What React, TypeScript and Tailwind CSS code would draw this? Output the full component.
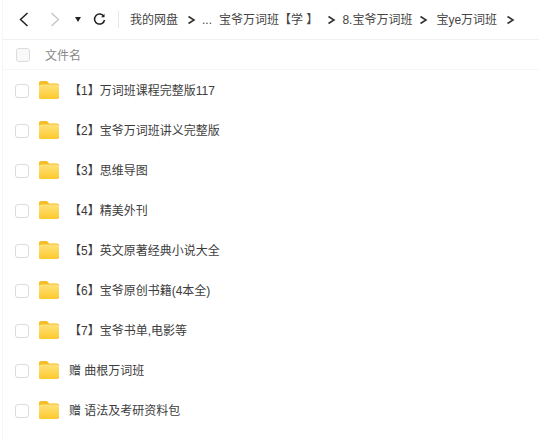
const files = [
  '【1】万词班课程完整版117',
  '【2】宝爷万词班讲义完整版',
  '【3】思维导图',
  '【4】精美外刊',
  '【5】英文原著经典小说大全',
  '【6】宝爷原创书籍(4本全)',
  '【7】宝爷书单,电影等',
  '赠 曲根万词班',
  '赠 语法及考研资料包',
]

const FONT = 'font-["Liberation_Sans","Noto_Sans_CJK_SC",sans-serif]'

function FolderIcon() {
  return (
    <svg width="20" height="18" viewBox="0 0 20 18" className="shrink-0">
      <defs>
        <linearGradient id="folderBody" x1="0" y1="0" x2="0" y2="1">
          <stop offset="0" stopColor="#ffe27a" />
          <stop offset="1" stopColor="#fdc92f" />
        </linearGradient>
      </defs>
      <path d="M0 2c0-1.200.8-2 2-2h5.200c.7 0 1.200.3 1.600.8L10 2.500h8c1.200 0 2 .8 2 2V16c0 1.200-.8 2-2 2H2c-1.200 0-2-.8-2-2z" fill="#f7bd25" />
      <path d="M0 5.500c0-1.200.8-2 2-2h16c1.200 0 2 .8 2 2V16c0 1.200-.8 2-2 2H2c-1.200 0-2-.8-2-2z" fill="url(#folderBody)" />
    </svg>
  )
}

function Check({ muted }: { muted?: boolean }) {
  return <span className={`block w-[14px] h-[14px] shrink-0 rounded-[3px] border border-[#dcdcdc] ${muted ? 'bg-[#f9f9f9]' : 'bg-white'}`} />
}

function Sep() {
  return (
    <svg width="9" height="10" viewBox="0 0 9 10" className="shrink-0" fill="none" stroke="#333" strokeWidth="1.600">
      <path d="M1.500 1.500 7 5l-5.500 3.500" />
    </svg>
  )
}

export default function App() {
  return (
    <div className={`w-[539px] h-[440px] overflow-hidden bg-white text-[#333] ${FONT}`}>
      <div className="ml-[2px] h-full border-l border-[#f6f6f6]">
        {/* 툴바 */}
        <div className="h-10 flex items-center border-b border-[#f0f0f0] pl-[16px]">
          <svg width="10" height="15" viewBox="0 0 10 15" fill="none" stroke="#222" strokeWidth="1.500" className="shrink-0">
            <path d="M8.500 1 1.500 7.500l7 6.500" />
          </svg>
          <svg width="10" height="15" viewBox="0 0 10 15" fill="none" stroke="#c4c4c4" strokeWidth="1.300" className="ml-[21px] shrink-0">
            <path d="M1.500 1l7 6.500-7 6.500" />
          </svg>
          <span className="ml-[15px] w-0 h-0 border-x-[3px] border-x-transparent border-t-[5px] border-t-[#222]" />
          <svg width="13" height="13" viewBox="0 0 13 13" fill="none" stroke="#222" strokeWidth="1.500" className="ml-[12px] shrink-0">
            <path d="M10.800 3.400A5 5 0 1 0 11.500 7" />
            <path d="M11.500 0.800v3.400H8.100" fill="#222" stroke="none" />
          </svg>
          <span className="ml-[12px] w-px h-[17px] bg-[#e6e6e6]" />
          <div className="ml-[11px] flex items-center text-xs whitespace-nowrap text-[#444]">
            <span>我的网盘</span>
            <span className="ml-[9px]"><Sep /></span>
            <span className="ml-[6px]">...</span>
            <span className="ml-[7px]">宝爷万词班【学 】</span>
            <span className="ml-[9px]"><Sep /></span>
            <span className="ml-[6px]">8.宝爷万词班</span>
            <span className="ml-[7px]"><Sep /></span>
            <span className="ml-[8px]">宝ye万词班</span>
            <span className="ml-[9px]"><Sep /></span>
          </div>
        </div>
        {/* 헤더 */}
        <div className="h-[30px] flex items-center border-b border-[#f5f5f5] pl-[13px]">
          <Check muted />
          <span className="ml-[15px] text-xs text-[#888] translate-y-px">文件名</span>
        </div>
        {/* 목록 */}
        <div className="pt-[1px]">
          {files.map((name) => (
            <div key={name} className="h-10 flex items-center pl-[12px]">
              <Check />
              <span className="ml-[10px] -translate-y-px"><FolderIcon /></span>
              <span className="ml-[10px] text-xs text-[#3c3c3c] whitespace-nowrap">{name}</span>
            </div>
          ))}
        </div>
      </div>
    </div>
  )
}
